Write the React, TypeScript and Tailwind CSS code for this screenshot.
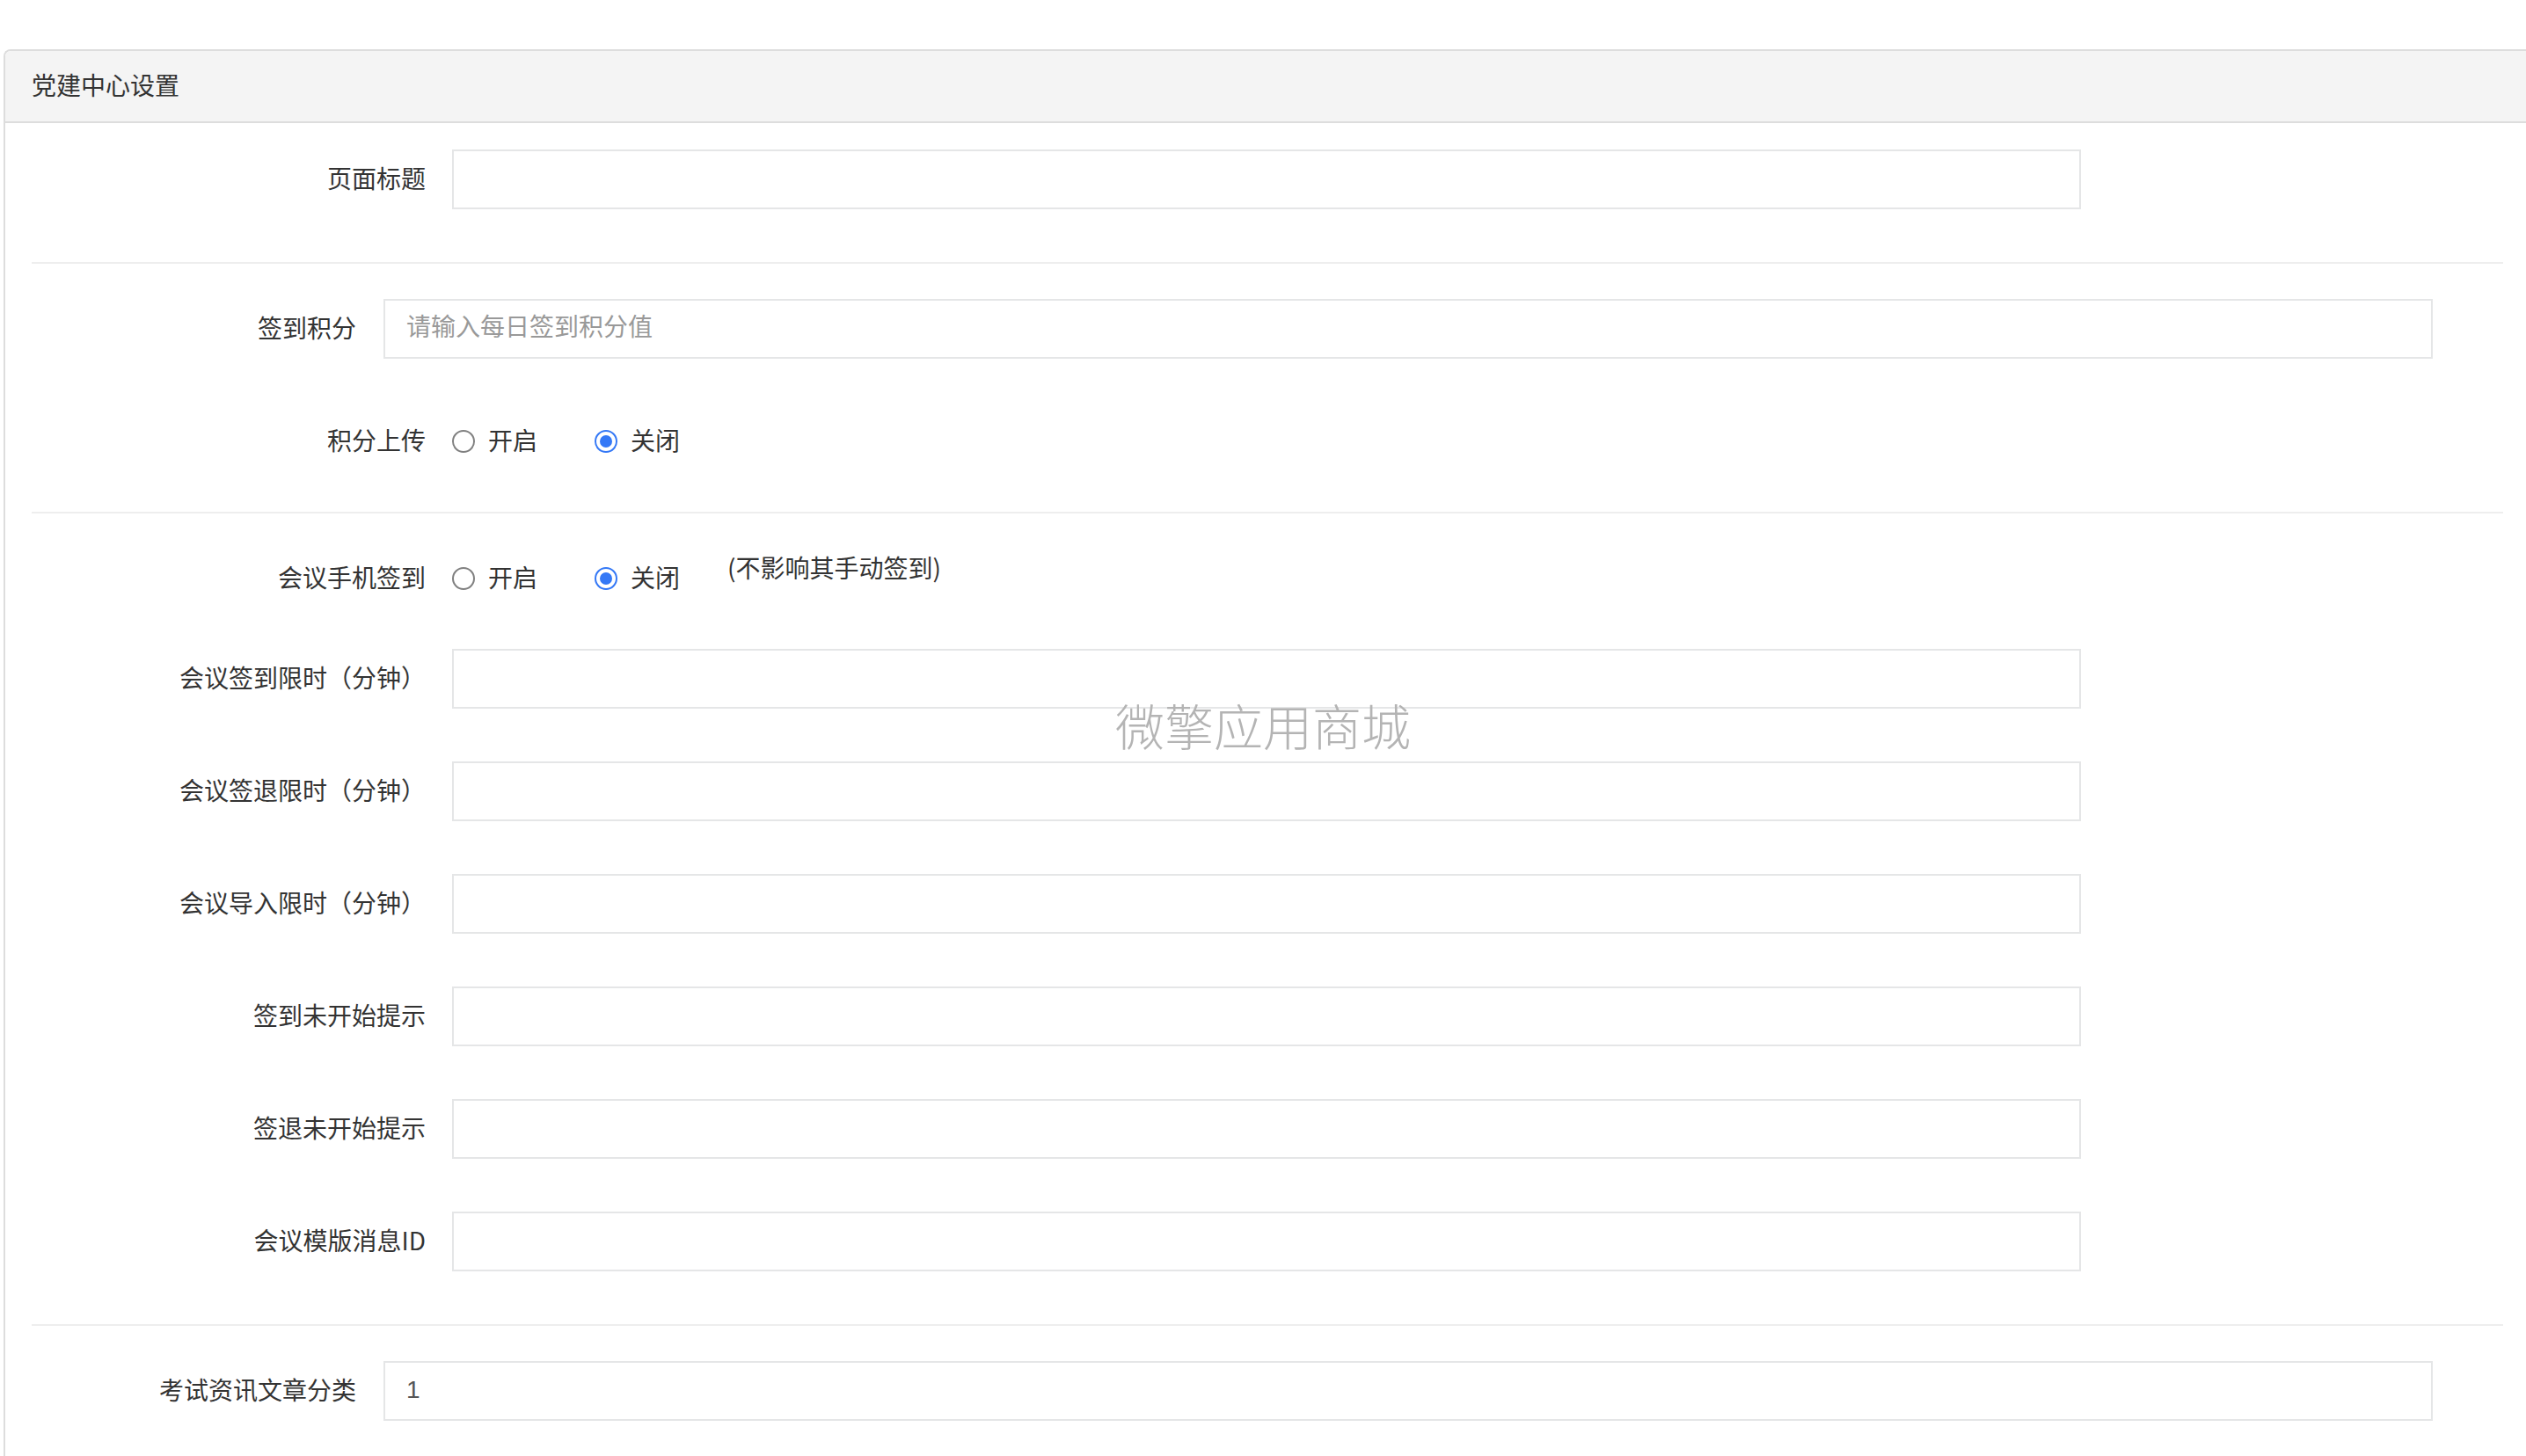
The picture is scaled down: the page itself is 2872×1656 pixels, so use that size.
import React from "react";

function Field({ label, wide, placeholder, value }: { label: string; wide?: boolean; placeholder?: string; value?: string }) {
  return (
    <div className="flex h-[68px] items-center">
      <div className={wide ? "w-[400px] shrink-0 pb-[4px] pr-[31px] text-right leading-[40px]" : "w-[478px] shrink-0 pb-[4px] pr-[30px] text-right leading-[40px]"}>
        {label}
      </div>
      <input
        readOnly
        defaultValue={value}
        placeholder={placeholder}
        className={
          (wide ? "w-[2330px]" : "w-[1852px]") +
          " h-[68px] border-2 border-[#e5e6e7] bg-white px-[24px] pb-[3px] font-['Liberation_Sans','Noto_Sans_CJK_SC',sans-serif] text-[28px] text-[#555] outline-none placeholder:font-['Noto_Sans_CJK_SC',sans-serif] placeholder:text-[#999]"
        }
      />
    </div>
  );
}

function Radio({ checked }: { checked?: boolean }) {
  if (checked) {
    return (
      <span className="flex h-[26px] w-[26px] shrink-0 items-center justify-center rounded-full border-2 border-[#3478f6] bg-white">
        <span className="h-[14px] w-[14px] rounded-full bg-[#3478f6]" />
      </span>
    );
  }
  return <span className="h-[26px] w-[26px] shrink-0 rounded-full border-2 border-[#808080] bg-white" />;
}

function RadioRow({ label, note }: { label: string; note?: string }) {
  return (
    <div className="flex h-[68px] items-center">
      <div className="w-[478px] shrink-0 pb-[4px] pr-[30px] text-right leading-[40px]">{label}</div>
      <Radio />
      <span className="ml-[15px] pb-[4px] leading-[40px]">开启</span>
      <span className="ml-[65px] flex items-center">
        <Radio checked />
        <span className="ml-[15px] pb-[4px] leading-[40px]">关闭</span>
      </span>
      {note && <span className="ml-[54px] mt-[1px] self-start leading-[40px]">{note}</span>}
    </div>
  );
}

function Divider() {
  return <div className="h-[2px] w-full bg-[#eeeeee]" />;
}

export default function App() {
  return (
    <div className="relative h-[1656px] w-[2872px] overflow-hidden bg-white font-['Noto_Sans_CJK_SC','Noto_Sans',sans-serif] text-[28px] text-[#333]">
      <div className="pt-[56px]">
        <div className="ml-[4px] min-h-[1700px] overflow-hidden rounded-tl-[8px] border-l-2 border-t-2 border-[#dddddd]">
          <div className="flex h-[82px] items-center border-b-2 border-[#dddddd] bg-[#f4f4f4] px-[30px] pb-[4px] leading-[40px]">
            党建中心设置
          </div>
          <div className="w-[2840px] pl-[30px] pt-[30px]">
            <div className="flex w-[2810px] flex-col">
              <div className="mb-[60px]">
                <Field label="页面标题" />
              </div>
              <Divider />
              <div className="mt-[40px] mb-[60px]">
                <Field label="签到积分" wide placeholder="请输入每日签到积分值" />
              </div>
              <div className="mb-[46px]">
                <RadioRow label="积分上传" />
              </div>
              <Divider />
              <div className="mt-[40px] mb-[46px]">
                <RadioRow label="会议手机签到" note="(不影响其手动签到)" />
              </div>
              <div className="flex flex-col gap-[60px]">
                <Field label="会议签到限时（分钟）" />
                <Field label="会议签退限时（分钟）" />
                <Field label="会议导入限时（分钟）" />
                <Field label="签到未开始提示" />
                <Field label="签退未开始提示" />
                <Field label="会议模版消息ID" />
              </div>
              <div className="mt-[60px]">
                <Divider />
              </div>
              <div className="mt-[40px]">
                <Field label="考试资讯文章分类" wide value="1" />
              </div>
            </div>
          </div>
        </div>
      </div>
      <div className="pointer-events-none absolute left-1/2 top-[calc(50%-4px)] -translate-x-1/2 -translate-y-1/2 whitespace-nowrap text-[56px] font-light leading-none text-[#b4b4b4]">
        微擎应用商城
      </div>
    </div>
  );
}
